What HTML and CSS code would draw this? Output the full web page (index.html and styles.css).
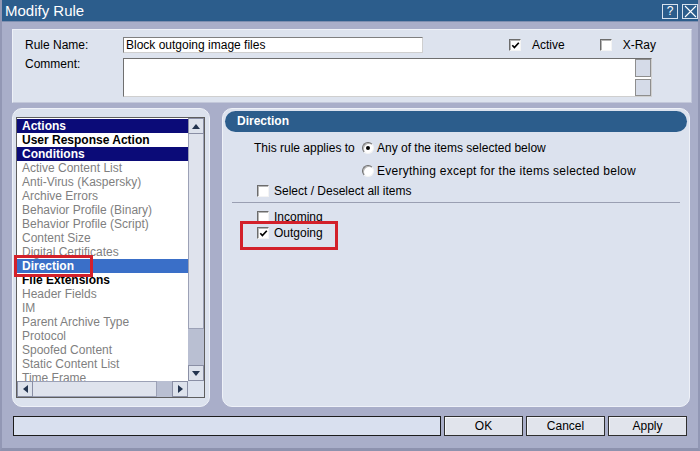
FILE: index.html
```html
<!DOCTYPE html>
<html>
<head>
<meta charset="utf-8">
<title>Modify Rule</title>
<link rel="stylesheet" href="styles.css">
</head>
<body>
<div class="dialog">
  <div class="titlebar">
    <span class="title">Modify Rule</span>
    <div class="tb-btns">
      <span class="tbtn">?</span>
      <span class="tbtn"><svg width="13" height="13" viewBox="0 0 13 13"><path d="M1 1L12 12M12 1L1 12" stroke="#fff" stroke-width="1.1" fill="none"/></svg></span>
    </div>
  </div>
  <div class="content">
    <div class="top-panel">
      <div class="row">
        <span class="lbl">Rule Name:</span>
        <div class="input">Block outgoing image files</div>
        <div class="check active-check"><span class="cb"><svg width="9" height="9" viewBox="0 0 9 9"><path d="M1.3 4.3L3.4 6.6L7.8 1.8" stroke="#000" stroke-width="1.7" fill="none"/></svg></span><span class="cb-text">Active</span></div>
        <div class="check xray-check"><span class="cb"></span><span class="cb-text">X-Ray</span></div>
      </div>
      <div class="row row-comment">
        <span class="lbl">Comment:</span>
        <div class="textarea">
          <div class="ta-scroll"><span class="ta-btn"></span><span class="ta-btn"></span></div>
        </div>
      </div>
    </div>

    <div class="middle">
      <div class="left-panel">
        <div class="listbox">
          <div class="lb-main">
            <div class="items">
              <div class="item header">Actions</div>
              <div class="item bold">User Response Action</div>
              <div class="item header">Conditions</div>
              <div class="item">Active Content List</div>
              <div class="item">Anti-Virus (Kaspersky)</div>
              <div class="item">Archive Errors</div>
              <div class="item">Behavior Profile (Binary)</div>
              <div class="item">Behavior Profile (Script)</div>
              <div class="item">Content Size</div>
              <div class="item">Digital Certificates</div>
              <div class="item selected">Direction</div>
              <div class="item bold">File Extensions</div>
              <div class="item">Header Fields</div>
              <div class="item">IM</div>
              <div class="item">Parent Archive Type</div>
              <div class="item">Protocol</div>
              <div class="item">Spoofed Content</div>
              <div class="item">Static Content List</div>
              <div class="item">Time Frame</div>
            </div>
            <div class="vscroll">
              <span class="sbtn"><svg width="8" height="5" viewBox="0 0 8 5"><polygon points="0,5 8,5 4,0" fill="#23344f"/></svg></span>
              <span class="vthumb"></span>
              <span class="vtrack"></span>
              <span class="sbtn"><svg width="8" height="5" viewBox="0 0 8 5"><polygon points="0,0 8,0 4,5" fill="#23344f"/></svg></span>
            </div>
          </div>
          <div class="hscroll">
            <span class="sbtn"><svg width="5" height="8" viewBox="0 0 5 8"><polygon points="5,0 5,8 0,4" fill="#23344f"/></svg></span>
            <span class="hthumb"></span>
            <span class="htrack"></span>
            <span class="sbtn"><svg width="5" height="8" viewBox="0 0 5 8"><polygon points="0,0 0,8 5,4" fill="#23344f"/></svg></span>
            <span class="corner"></span>
          </div>
        </div>
        <span class="mark mark-direction"></span>
      </div>

      <div class="right-panel">
        <div class="section-head">Direction</div>
        <div class="opts">
          <div class="opt-row">
            <span class="opt-lbl">This rule applies to</span>
            <span class="radio"><span class="dot"></span></span>
            <span class="radio-text">Any of the items selected below</span>
          </div>
          <div class="opt-row indent">
            <span class="radio"></span>
            <span class="radio-text">Everything except for the items selected below</span>
          </div>
          <div class="opt-row check-row select-all">
            <span class="cb"></span><span class="cb-text">Select / Deselect all items</span>
          </div>
        </div>
        <div class="sep"></div>
        <div class="opts">
          <div class="opt-row check-row incoming">
            <span class="cb"></span><span class="cb-text">Incoming</span>
          </div>
          <div class="opt-row check-row outgoing">
            <span class="cb"><svg width="9" height="9" viewBox="0 0 9 9"><path d="M1.3 4.3L3.4 6.6L7.8 1.8" stroke="#000" stroke-width="1.7" fill="none"/></svg></span><span class="cb-text">Outgoing</span>
          </div>
        </div>
      </div>
    </div>

    <div class="bottom">
      <div class="status"></div>
      <div class="btn">OK</div>
      <div class="btn">Cancel</div>
      <div class="btn">Apply</div>
    </div>
  </div>
</div>
</body>
</html>
```

FILE: styles.css
```css
* { box-sizing: border-box; }

html, body {
  margin: 0;
  padding: 0;
  background: #a9aec9;
}

body {
  font-family: "Liberation Sans", Arial, sans-serif;
  font-size: 12px;
  color: #000;
}

.dialog {
  width: 700px;
  height: 451px;
  background: #a9aec9;
  border-left: 2px solid #9297b4;
  border-right: 2px solid #9297b4;
  border-bottom: 3px solid #8d92ae;
  display: flex;
  flex-direction: column;
  overflow: hidden;
}

/* Title bar */
.titlebar {
  height: 22px;
  margin: 0 -2px;
  background: #2c5d8c;
  display: flex;
  align-items: center;
  justify-content: space-between;
  padding: 0 2px 0 5px;
  border-bottom: 1px solid #7f8fb0;
}

.title {
  color: #fff;
  font-size: 15px;
  line-height: 20px;
}

.tb-btns {
  display: flex;
  gap: 4px;
  padding-top: 1px;
}

.tbtn {
  width: 16px;
  height: 15px;
  border: 1px solid #d8e2ee;
  color: #fff;
  font-size: 12px;
  line-height: 13px;
  display: flex;
  align-items: center;
  justify-content: center;
}

/* Content */
.content {
  padding: 7px 0 0 10px;
  display: flex;
  flex-direction: column;
}

.top-panel {
  width: 680px;
  height: 74px;
  background: #dde3ee;
  border: 1px solid #eef1f8;
  border-right-color: #c3c8da;
  border-bottom-color: #c3c8da;
  padding: 7px 0 0 12px;
}

.row {
  display: flex;
  align-items: center;
  height: 16px;
}

.lbl {
  width: 98px;
  flex: none;
}

.input {
  width: 300px;
  height: 16px;
  background: #fff;
  border: 1px solid;
  border-color: #7f7f7f #cfcfcf #cfcfcf #7f7f7f;
  padding-left: 2px;
  line-height: 14px;
}

.check {
  display: flex;
  align-items: center;
}

.active-check { margin-left: 86px; }
.xray-check { margin-left: 35px; }

.cb {
  width: 12px;
  height: 12px;
  flex: none;
  background: #fff;
  border: 1px solid;
  border-color: #6c6c6c #f4f4f4 #f4f4f4 #6c6c6c;
  box-shadow: inset 1px 1px 0 #b5b5b5;
  display: flex;
  align-items: center;
  justify-content: center;
}

.cb-text {
  margin-left: 11px;
}

.row-comment {
  margin-top: 5px;
  height: 39px;
  align-items: flex-start;
}

.row-comment .lbl {
  line-height: 13px;
}

.textarea {
  width: 529px;
  height: 39px;
  background: #fff;
  border: 1px solid;
  border-color: #6f6f6f #cfcfcf #cfcfcf #6f6f6f;
  display: flex;
  justify-content: flex-end;
}

.ta-scroll {
  width: 16px;
  display: flex;
  flex-direction: column;
  gap: 2px;
}

.ta-btn {
  flex: 1;
  background: #d5dbe8;
  border: 1px solid #8e8e8e;
}

/* Middle */
.middle {
  margin-top: 5px;
  height: 299px;
  display: flex;
  gap: 12px;
}

.left-panel {
  position: relative;
  width: 198px;
  height: 299px;
  background: #dce2ee;
  border: 1px solid #eef1f8;
  border-radius: 10px;
  padding: 8px 0 0 3px;
}

.listbox {
  width: 189px;
  height: 281px;
  border: 1px solid #5e5e5e;
  background: #fff;
  display: flex;
  flex-direction: column;
}

.lb-main {
  height: 263px;
  display: flex;
}

.items {
  flex: 1;
  overflow: hidden;
  padding-top: 1px;
}

.item {
  height: 14px;
  line-height: 14px;
  padding-left: 5px;
  color: #7f7f7f;
  white-space: nowrap;
}

.item.header {
  background: #0b0b78;
  color: #fff;
  font-weight: bold;
}

.item.bold {
  color: #000;
  font-weight: bold;
}

.item.selected {
  background: #3a6fc8;
  color: #fff;
  font-weight: bold;
}

.vscroll {
  width: 16px;
  display: flex;
  flex-direction: column;
  background: #b9bfd2;
}

.sbtn {
  width: 16px;
  height: 16px;
  flex: none;
  background: #dde2ec;
  border: 1px solid #8a8fa5;
  display: flex;
  align-items: center;
  justify-content: center;
}

.vthumb {
  height: 195px;
  background: #dfe3ed;
  border: 1px solid #9ca1b6;
  border-top: none;
}

.vtrack {
  flex: 1;
}

.hscroll {
  height: 16px;
  display: flex;
  background: #b9bfd2;
}

.hthumb {
  width: 124px;
  background: #dfe3ed;
  border: 1px solid #9ca1b6;
  border-left: none;
}

.htrack {
  flex: 1;
}

.corner {
  width: 16px;
  background: #dce2ee;
}

.mark {
  position: absolute;
  border: 3px solid #d3202a;
}

.mark-direction {
  left: 1px;
  top: 146px;
  width: 79px;
  height: 22px;
}

/* Right panel */
.right-panel {
  width: 468px;
  height: 299px;
  background: #dce2ee;
  border: 1px solid #eef1f8;
  border-radius: 10px;
  padding: 2px 2px 0 2px;
}

.section-head {
  height: 21px;
  border-radius: 11px;
  background: #2c5d8c;
  color: #fff;
  font-weight: bold;
  line-height: 21px;
  padding-left: 12px;
}

.opts {
  padding-left: 29px;
  margin-top: 9px;
}

.opt-row {
  display: flex;
  align-items: center;
  height: 14px;
}

.opt-lbl {
  width: 108px;
  flex: none;
}

.radio {
  width: 12px;
  height: 12px;
  flex: none;
  border-radius: 50%;
  background: #fff;
  border: 1px solid;
  border-color: #6c6c6c #f4f4f4 #f4f4f4 #6c6c6c;
  box-shadow: inset 1px 1px 0 #b5b5b5;
  display: flex;
  align-items: center;
  justify-content: center;
}

.dot {
  width: 4px;
  height: 4px;
  border-radius: 50%;
  background: #000;
}

.radio-text {
  margin-left: 3px;
}

.opt-row.indent {
  margin-top: 9px;
  padding-left: 108px;
}

.opt-row.indent .radio-text {
  letter-spacing: 0.25px;
}

.check-row {
  padding-left: 3px;
}

.check-row .cb-text {
  margin-left: 5px;
}

.select-all {
  margin-top: 6px;
}

.sep {
  margin: 4px 0 0 7px;
  width: 448px;
  height: 1px;
  background: #9a9fb2;
}

.sep + .opts {
  margin-top: 7px;
}

.outgoing {
  margin-top: 2px;
  position: relative;
}

.outgoing::after {
  content: "";
  position: absolute;
  left: -14px;
  top: -5px;
  width: 92px;
  height: 23px;
  border: 3px solid #d3202a;
}

/* Bottom */
.bottom {
  margin-top: 9px;
  height: 20px;
  display: flex;
  padding-left: 1px;
}

.status {
  width: 428px;
  height: 20px;
  background: #d9e0ef;
  border: 1px solid #1c1c1c;
}

.btn {
  width: 79px;
  height: 20px;
  margin-left: 3px;
  background: #e1e4ec;
  border: 1px solid #2e2e2e;
  box-shadow: inset 1px 1px 0 #f5f6fa;
  text-align: center;
  line-height: 18px;
}
```
